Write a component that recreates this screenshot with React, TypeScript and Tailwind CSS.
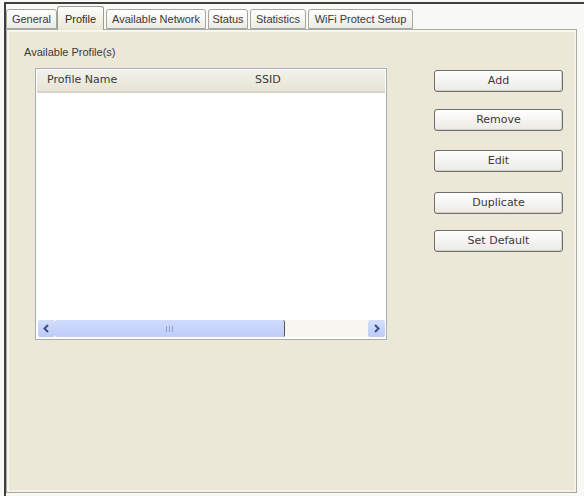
import React from "react";

const font = { fontFamily: '"Liberation Sans", Arial, sans-serif' };
const wideFont = { fontFamily: '"DejaVu Sans", Verdana, sans-serif' };

type TabProps = { label: string; w: string; selected?: boolean; gap?: string };

function Tab({ label, w, selected, gap }: TabProps) {
  if (selected) {
    return (
      <div
        className={`${w} ${gap ?? ""} h-[24px] flex items-start justify-center pt-[4px] border border-b-0 border-[#9a9d94] rounded-t-[3px] bg-gradient-to-b from-[#fdfdfb] to-[#ebe8d6] text-[11px] text-[#2b2b2b]`}
      >
        {label}
      </div>
    );
  }
  return (
    <div
      className={`${w} ${gap ?? ""} h-[20px] mb-[1px] flex items-center justify-center border border-[#a4a79e] rounded-t-[3px] bg-gradient-to-b from-white to-[#ecebe4] text-[11px] text-[#3a3a3a]`}
    >
      {label}
    </div>
  );
}

function Button({ label, mt }: { label: string; mt: string }) {
  return (
    <div
      style={wideFont}
      className={`${mt} h-[22px] w-[129px] flex items-center justify-center rounded-[3px] border border-[#6f6f6f] bg-gradient-to-b from-white to-[#ebeae4] shadow-[inset_-1px_-1px_0_#d4d2c8] text-[11px] text-[#3a3a3a]`}
    >
      {label}
    </div>
  );
}

function Chevron({ dir }: { dir: "left" | "right" }) {
  return (
    <svg width="9" height="9" viewBox="0 0 9 9">
      <path
        d={dir === "left" ? "M6 1 L2.5 4.5 L6 8" : "M3 1 L6.5 4.5 L3 8"}
        fill="none"
        stroke="#3b4f8f"
        strokeWidth="2"
      />
    </svg>
  );
}

export default function App() {
  return (
    <div className="w-[584px] h-[496px] bg-[#f8f8f4] pl-[4px] pt-[2px] overflow-hidden" style={font}>
      <div className="h-[494px] border-l-2 border-t-2 border-[#3f3f3f] flex flex-col">
        {/* tab strip */}
        <div className="flex items-end h-[26px] -mb-px relative z-10">
          <Tab label="General" w="w-[51px]" />
          <Tab label="Profile" w="w-[47px]" selected />
          <Tab label="Available Network" w="w-[100px]" gap="ml-[2px]" />
          <Tab label="Status" w="w-[40px]" gap="ml-[2px]" />
          <Tab label="Statistics" w="w-[56px]" gap="ml-[2px]" />
          <Tab label="WiFi Protect Setup" w="w-[105px]" gap="ml-[2px]" />
        </div>

        {/* tab page */}
        <div className="w-[571px] h-[464px] border border-[#a9aca3] bg-gradient-to-b from-[#ebe8d7] to-[#ece8d8] shadow-[inset_2px_2px_0_#f7f6ef,inset_-2px_-2px_0_#f3f2ea] flex flex-col pl-[17px] pt-[14px]">
          <div className="h-[16px] leading-[16px] text-[11px] text-[#3a3a3a]">Available Profile(s)</div>

          <div className="flex mt-[8px]">
            {/* profile list */}
            <div className="ml-[11px] w-[352px] h-[272px] border border-[#a7aeb7] bg-white flex flex-col p-[1px]">
              <div
                style={wideFont}
                className="h-[23px] flex items-center bg-gradient-to-b from-[#f3f2ea] to-[#e6e4d6] border-b-2 border-[#d8d5c6] text-[11px] text-[#3a3a3a]"
              >
                <div className="w-[218px] pl-[10px]">Profile Name</div>
                <div className="flex-1">SSID</div>
              </div>
              <div className="flex-1" />
              {/* horizontal scroll bar */}
              <div className="h-[17px] flex items-stretch mb-[1px]">
                <div className="w-[17px] ml-[1px] rounded-[2px] bg-gradient-to-b from-[#d5dffc] to-[#bccbf6] flex items-center justify-center">
                  <Chevron dir="left" />
                </div>
                <div className="w-[230px] rounded-[2px] bg-gradient-to-b from-[#cfdafc] to-[#bfcdf8] border-r border-[#555] flex items-center justify-center">
                  <div className="flex gap-[2px]">
                    <div className="w-[1px] h-[6px] bg-[#8fa2d8]" />
                    <div className="w-[1px] h-[6px] bg-[#8fa2d8]" />
                    <div className="w-[1px] h-[6px] bg-[#8fa2d8]" />
                  </div>
                </div>
                <div className="flex-1 bg-[#f7f6f1]" />
                <div className="w-[17px] rounded-[2px] bg-gradient-to-b from-[#d5dffc] to-[#bccbf6] flex items-center justify-center">
                  <Chevron dir="right" />
                </div>
              </div>
            </div>

            {/* actions */}
            <div className="ml-[47px] mt-[2px] flex flex-col">
              <Button label="Add" mt="mt-0" />
              <Button label="Remove" mt="mt-[17px]" />
              <Button label="Edit" mt="mt-[19px]" />
              <Button label="Duplicate" mt="mt-[20px]" />
              <Button label="Set Default" mt="mt-[16px]" />
            </div>
          </div>
        </div>
      </div>
    </div>
  );
}
